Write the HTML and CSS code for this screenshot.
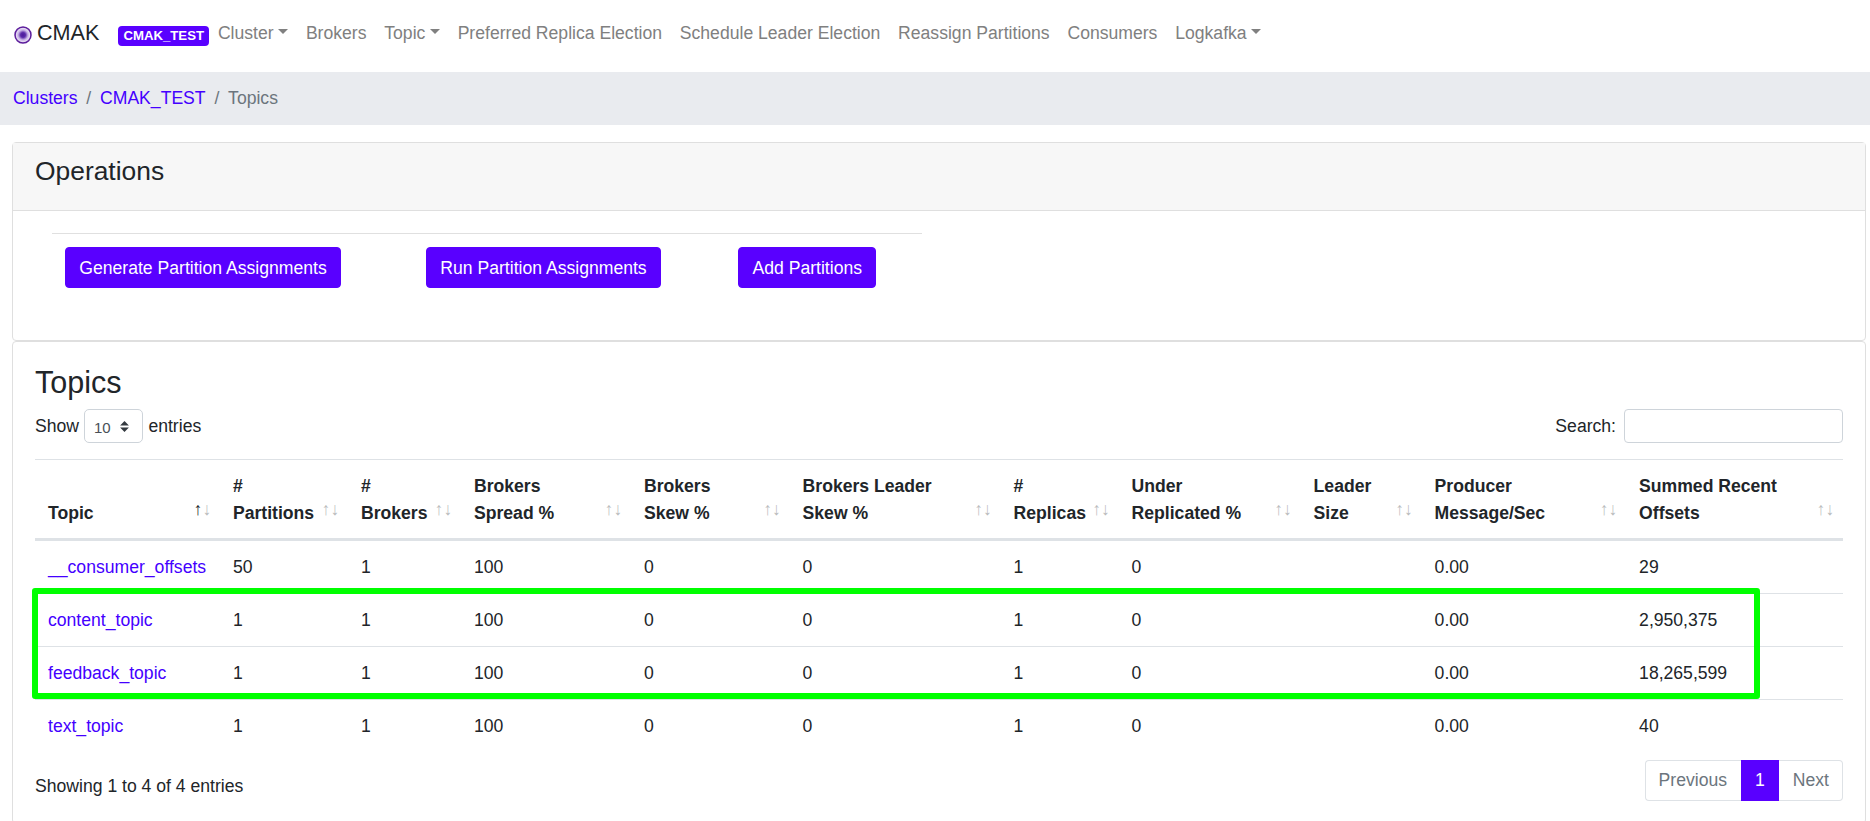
FILE: index.html
```html
<!DOCTYPE html>
<html lang="en">
<head>
<meta charset="utf-8">
<title>CMAK Topics</title>
<link rel="stylesheet" href="styles.css">
</head>
<body>
<nav class="navbar">
  <a class="brand" href="#">
    <svg class="brand-icon" width="18" height="18" viewBox="0 0 18 18" aria-hidden="true">
      <defs>
        <radialGradient id="eye">
          <stop offset="0" stop-color="#4b1a9a"/>
          <stop offset="0.3" stop-color="#5a2aa8"/>
          <stop offset="0.62" stop-color="#c9b4e6"/>
          <stop offset="0.85" stop-color="#e6dcf3"/>
          <stop offset="1" stop-color="#b79ad8"/>
        </radialGradient>
      </defs>
      <circle cx="9" cy="9" r="8" fill="url(#eye)" stroke="#5d1e9c" stroke-width="1.5"/>
    </svg>
    <span>CMAK</span>
  </a>
  <span class="badge">CMAK_TEST</span>
  <a class="nav-link caret" href="#">Cluster</a>
  <a class="nav-link" href="#">Brokers</a>
  <a class="nav-link caret" href="#">Topic</a>
  <a class="nav-link" href="#">Preferred Replica Election</a>
  <a class="nav-link" href="#">Schedule Leader Election</a>
  <a class="nav-link" href="#">Reassign Partitions</a>
  <a class="nav-link" href="#">Consumers</a>
  <a class="nav-link caret" href="#">Logkafka</a>
</nav>

<ol class="breadcrumb">
  <li><a href="#">Clusters</a></li>
  <li class="sep">/</li>
  <li><a href="#">CMAK_TEST</a></li>
  <li class="sep">/</li>
  <li class="current">Topics</li>
</ol>

<main class="content">
  <section class="card">
    <header class="card-header"><h3>Operations</h3></header>
    <div class="card-body ops-body">
      <hr class="ops-rule">
      <div class="ops-buttons">
        <div><a class="btn" href="#">Generate Partition Assignments</a></div>
        <div><a class="btn" href="#">Run Partition Assignments</a></div>
        <div><a class="btn" href="#">Add Partitions</a></div>
      </div>
    </div>
  </section>

  <section class="card">
    <div class="card-body">
      <h2>Topics</h2>
      <div class="table-controls">
        <label class="length">Show
          <select class="length-select"><option>10</option><option>25</option></select>
          entries</label>
        <label class="filter">Search:<input class="search" type="search"></label>
      </div>
      <table class="topics">
        <colgroup>
          <col class="c1"><col class="c2"><col class="c3"><col class="c4"><col class="c5"><col class="c6">
          <col class="c7"><col class="c8"><col class="c9"><col class="c10"><col class="c11">
        </colgroup>
        <thead>
          <tr>
            <th class="sorted">Topic</th>
            <th>#<br>Partitions</th>
            <th>#<br>Brokers</th>
            <th>Brokers<br>Spread %</th>
            <th>Brokers<br>Skew %</th>
            <th>Brokers Leader<br>Skew %</th>
            <th>#<br>Replicas</th>
            <th>Under<br>Replicated %</th>
            <th>Leader<br>Size</th>
            <th>Producer<br>Message/Sec</th>
            <th>Summed Recent<br>Offsets</th>
          </tr>
        </thead>
        <tbody>
          <tr><td><a href="#">__consumer_offsets</a></td><td>50</td><td>1</td><td>100</td><td>0</td><td>0</td><td>1</td><td>0</td><td></td><td>0.00</td><td>29</td></tr>
          <tr><td><a href="#">content_topic</a></td><td>1</td><td>1</td><td>100</td><td>0</td><td>0</td><td>1</td><td>0</td><td></td><td>0.00</td><td>2,950,375</td></tr>
          <tr><td><a href="#">feedback_topic</a></td><td>1</td><td>1</td><td>100</td><td>0</td><td>0</td><td>1</td><td>0</td><td></td><td>0.00</td><td>18,265,599</td></tr>
          <tr><td><a href="#">text_topic</a></td><td>1</td><td>1</td><td>100</td><td>0</td><td>0</td><td>1</td><td>0</td><td></td><td>0.00</td><td>40</td></tr>
        </tbody>
      </table>
      <div class="table-footer">
        <div class="info">Showing 1 to 4 of 4 entries</div>
        <ul class="pagination">
          <li><a class="page first" href="#">Previous</a></li>
          <li><a class="page active" href="#">1</a></li>
          <li><a class="page last" href="#">Next</a></li>
        </ul>
      </div>
    </div>
  </section>
</main>

<div class="highlight" aria-hidden="true"></div>
</body>
</html>
```

FILE: styles.css
```css
html {
  font-size: 17.6px;
}

* {
  box-sizing: border-box;
}

body {
  position: relative;
  margin: 0;
  height: 100vh;
  overflow: hidden;
  background: #fff;
  color: #212529;
  font-family: "Liberation Sans", Arial, sans-serif;
  font-size: 1rem;
  line-height: 1.5;
}

a {
  color: #4400ff;
  text-decoration: none;
}

/* Navbar */
.navbar {
  display: flex;
  align-items: flex-start;
  height: 72px;
  padding: 11px 0 0 14px;
}

.brand {
  display: flex;
  align-items: center;
  color: #212529;
  font-size: 21.6px;
  line-height: 44px;
  height: 44px;
}

.brand-icon {
  margin: 4px 5px 0 0;
}

.badge {
  margin: 15px 0 0 19px;
  padding: 3.3px 5px;
  border-radius: 4px;
  background: #5900ff;
  color: #fff;
  font-size: 13.2px;
  font-weight: 700;
  line-height: 13.2px;
}

.nav-link {
  padding: 8.8px 8.9px;
  color: #808080;
}

.caret::after {
  content: "";
  display: inline-block;
  margin-left: .255em;
  vertical-align: .255em;
  border-top: .3em solid;
  border-right: .3em solid transparent;
  border-left: .3em solid transparent;
}

/* Breadcrumb */
.breadcrumb {
  display: flex;
  margin: 0 0 1rem;
  padding: 13.2px 13px;
  list-style: none;
  background: #e9ebef;
}

.breadcrumb .sep {
  padding: 0 8.8px;
  color: #6c757d;
}

.breadcrumb .current {
  color: #6c757d;
}

/* Cards */
.content {
  margin: 0 4px 0 12px;
}

.card {
  border: 1px solid #dfdfdf;
  border-radius: 4px;
  background: #fff;
}

.card-header {
  padding: 12.2px 22px 14.2px;
  border-bottom: 1px solid #dfdfdf;
  background: #f7f7f7;
}

.card-header h3 {
  margin: 0 0 8.8px;
  font-size: 26.4px;
  font-weight: 400;
  line-height: 1.2;
}

.card-body {
  padding: 22px;
}

.ops-body {
  padding-bottom: 52px;
}

.ops-rule {
  width: 870px;
  height: 1px;
  margin: 0 0 13px 17px;
  border: 0;
  background: #e0e0e0;
}

.ops-buttons {
  display: grid;
  grid-template-columns: 361px 312.2px auto;
  padding-left: 30px;
}

.btn {
  display: inline-block;
  padding: 6.4px 13.3px;
  border: 1px solid #5900ff;
  border-radius: 4px;
  background: #5900ff;
  color: #fff;
}

/* Topics */
h2 {
  margin: 0 0 8.8px;
  font-size: 30.5px;
  font-weight: 400;
  line-height: 36px;
}

.table-controls {
  display: flex;
  justify-content: space-between;
  align-items: center;
  height: 34px;
  margin-bottom: 15.4px;
}

.length,
.filter {
  display: flex;
  align-items: center;
  column-gap: 5px;
}

.length-select {
  width: 59.4px;
  height: 33.4px;
  padding: 5px 20px 3px 9px;
  border: 1px solid #ced4da;
  border-radius: 5px;
  appearance: none;
  background: #fff url("data:image/svg+xml,%3csvg xmlns='http://www.w3.org/2000/svg' width='4' height='5' viewBox='0 0 4 5'%3e%3cpath fill='%23343a40' d='M2 0L0 2h4zm0 5L0 3h4z'/%3e%3c/svg%3e") no-repeat right 13px center / 9px 11px;
  color: #495057;
  font-family: "Liberation Sans", Arial, sans-serif;
  font-size: 15px;
}

.filter {
  column-gap: 8px;
}

.search {
  width: 219px;
  height: 34px;
  padding: 4px 8px;
  border: 1px solid #ced4da;
  border-radius: 4px;
}

.topics {
  width: 100%;
  table-layout: fixed;
  border-collapse: separate;
  border-spacing: 0;
}

.c1 { width: 185px; }
.c2 { width: 128px; }
.c3 { width: 113px; }
.c4 { width: 170px; }
.c5 { width: 158.6px; }
.c6 { width: 211px; }
.c7 { width: 118px; }
.c8 { width: 182px; }
.c9 { width: 121px; }
.c10 { width: 204.5px; }
.c11 { width: 216.9px; }

.topics th,
.topics td {
  padding: 12.8px 13px;
  border-top: 1px solid #dee2e6;
  text-align: left;
  vertical-align: top;
}

.topics th {
  position: relative;
  padding-top: 13.6px;
  padding-bottom: 12px;
  border-bottom: 2px solid #dee2e6;
  vertical-align: bottom;
  font-weight: 700;
}

.topics th::before,
.topics th::after {
  position: absolute;
  bottom: .9em;
  font-weight: 400;
  opacity: .3;
}

.topics th::before {
  content: "\2191";
  right: 1em;
}

.topics th::after {
  content: "\2193";
  right: .5em;
}

.topics th.sorted::before {
  opacity: 1;
}

.table-footer {
  display: flex;
  justify-content: space-between;
  align-items: flex-start;
  margin-top: 6px;
}

.info {
  padding-top: 15.6px;
}

.pagination {
  display: flex;
  margin: 2px 0 0;
  padding: 0;
  list-style: none;
}

.page {
  display: block;
  padding: 6.4px 13px;
  border: 1px solid #dee2e6;
  color: #6c757d;
}

.page.first {
  padding-right: 14px;
  border-right: 0;
  border-radius: 4px 0 0 4px;
}

.page.last {
  padding-left: 14px;
  border-left: 0;
  border-radius: 0 4px 4px 0;
}

.page.active {
  border-color: #5900ff;
  background: #5900ff;
  color: #fff;
}

/* Annotation drawn on top of the screenshot */
.highlight {
  position: absolute;
  left: 32px;
  top: 588px;
  width: 1728px;
  height: 111px;
  border: 6px solid #00ff00;
  border-radius: 3px;
  pointer-events: none;
}
```
